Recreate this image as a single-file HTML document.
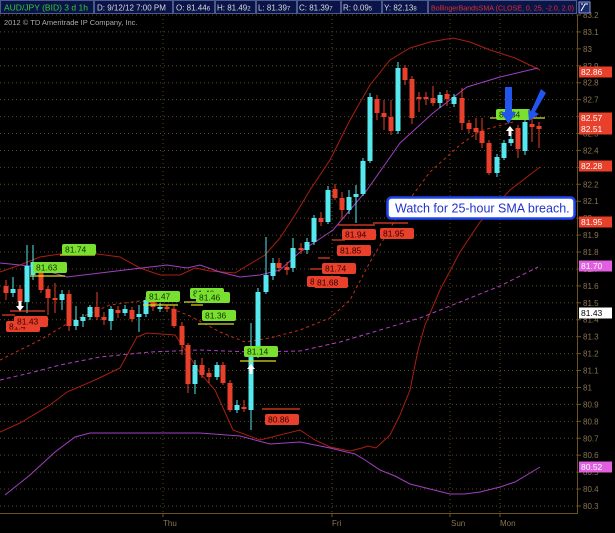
<!DOCTYPE html>
<html><head><meta charset="utf-8"><style>
html,body{margin:0;padding:0;background:#000;width:615px;height:533px;overflow:hidden}
svg{display:block}
text{font-family:"Liberation Sans",sans-serif}
</style></head><body>
<svg id="s" width="615" height="533" viewBox="0 0 615 533" xmlns="http://www.w3.org/2000/svg">
<rect width="615" height="533" fill="#000"/>
<g id="grid"></g>
<g id="lines" fill="none"></g>
<g id="candles"></g>
<g id="labels"></g>
<!-- header -->
<g font-size="8">
<rect x="0" y="0" width="590" height="14" fill="#0a1448"/>
<g stroke="#4a5a8a" fill="none" stroke-width="1">
<rect x="0.5" y="0.5" width="93" height="13"/><rect x="94.5" y="0.5" width="78" height="13"/>
<rect x="173.5" y="0.5" width="41" height="13"/><rect x="215.5" y="0.5" width="40" height="13"/>
<rect x="256.5" y="0.5" width="40" height="13"/><rect x="297.5" y="0.5" width="43" height="13"/>
<rect x="341.5" y="0.5" width="40" height="13"/><rect x="382.5" y="0.5" width="45" height="13"/>
<rect x="428.5" y="0.5" width="148" height="13"/>
</g>
<text x="4" y="10.5" fill="#33cc33" font-size="8.5">AUD/JPY (BID) 3 d 1h</text>
<text x="97" y="10.5" fill="#d8d8d8">D: 9/12/12 7:00 PM</text>
<text x="176" y="10.5" fill="#d8d8d8">O: 81.44<tspan font-size="6">6</tspan></text>
<text x="217" y="10.5" fill="#d8d8d8">H: 81.49<tspan font-size="6">2</tspan></text>
<text x="258" y="10.5" fill="#d8d8d8">L: 81.39<tspan font-size="6">7</tspan></text>
<text x="299" y="10.5" fill="#d8d8d8">C: 81.39<tspan font-size="6">7</tspan></text>
<text x="343" y="10.5" fill="#d8d8d8">R: 0.09<tspan font-size="6">5</tspan></text>
<text x="384" y="10.5" fill="#d8d8d8">Y: 82.13<tspan font-size="6">8</tspan></text>
<text x="431" y="10.5" fill="#e03030" font-size="7.2" textLength="143" lengthAdjust="spacingAndGlyphs">BollingerBandsSMA (CLOSE, 0, 25, -2.0, 2.0)</text>
<rect x="579" y="2" width="11" height="11" fill="#1a2a6a" stroke="#8899cc"/>
<path d="M581 11 L585 4 L588 4 M581 4 L583 4" stroke="#fff" fill="none"/>
</g>
<text x="4" y="25" font-size="7.5" fill="#aaa">2012 © TD Ameritrade IP Company, Inc.</text>
<!-- annotation -->
<rect x="387.5" y="197.5" width="187" height="21" rx="4" fill="#fff" stroke="#1e46f0" stroke-width="2.5"/>
<text x="395" y="212.5" font-size="12.5" fill="#2233cc">Watch for 25-hour SMA breach.</text>
<!-- blue arrows -->
<g fill="#2255ee">
<path d="M505 87 L512 87 L512 112 L516 112 L508.5 124 L501 112 L505 112 Z"/>
<path d="M541 89 L546 93 L535 112 L539 114 L529 121 L528 110 L531 111 Z"/>
</g>
</svg>
<script>
const S=document.getElementById('s');
const ns='http://www.w3.org/2000/svg';
function el(p,t,a,txt){const e=document.createElementNS(ns,t);for(const k in a)e.setAttribute(k,a[k]);if(txt!==undefined)e.textContent=txt;document.getElementById(p).appendChild(e);return e;}
const Y=p=>15+(83.2-p)*169.3;
for(let i=0;i<=29;i++){const p=83.2-i*0.1;const y=Y(p);
 el('grid','line',{x1:0,x2:577,y1:y,y2:y,stroke:'#5a4a20','stroke-dasharray':'1,3'});
 el('grid','line',{x1:577,x2:581,y1:y,y2:y,stroke:'#6b5320'});
 let t=(Math.round(p*10)/10).toString();
 el('grid','text',{x:583,y:y+3,'font-size':8,fill:'#8a7450'},t);}
[163,332,450,500].forEach(x=>{el('grid','line',{x1:x,x2:x,y1:15,y2:513,stroke:'#5a4a20','stroke-dasharray':'1,3'});
 el('grid','line',{x1:x,x2:x,y1:513,y2:517,stroke:'#6b5320'});});
el('grid','line',{x1:577.5,x2:577.5,y1:15,y2:514,stroke:'#6b5320'});
el('grid','line',{x1:0,x2:578,y1:513.5,y2:513.5,stroke:'#6b5320'});
[['Thu',163],['Fri',332],['Sun',451],['Mon',500]].forEach(a=>el('grid','text',{x:a[1],y:526,'font-size':8,fill:'#8a7450'},a[0]));
function pl(pts,col,dash,w){el('lines','polyline',{points:pts.map(p=>p.join(',')).join(' '),stroke:col,'stroke-width':w||1,'stroke-dasharray':dash||''});}
pl([[0,272],[20,265],[40,257],[60,254],[90,253],[120,257],[140,268],[160,275],[180,275],[195,268],[210,271],[235,273],[250,264],[265,255],[280,238],[295,215],[310,190],[330,160],[350,120],[370,85],[390,60],[410,48],[430,42],[453,38],[470,42],[490,50],[515,58],[540,70]],'#a82010');
pl([[0,432],[20,423],[50,405],[67,392],[95,380],[120,368],[137,337],[147,333],[175,335],[190,357],[200,373],[215,390],[233,430],[260,440],[300,430],[315,440],[330,447],[350,451],[362,448],[368,446],[376,448],[390,435],[400,415],[410,390],[418,350],[425,325],[440,290],[460,252],[480,222],[510,190],[540,167]],'#a82010');
pl([[0,360],[40,340],[70,322],[110,305],[140,301],[160,304],[190,316],[220,332],[245,342],[270,338],[300,330],[330,318],[350,300],[370,262],[400,212],[430,172],[460,145],[480,131],[513,122]],'#c03018','3,3');
pl([[0,263],[30,266],[67,277],[100,273],[133,269],[167,265],[187,268],[200,265],[220,272],[240,277],[260,275],[280,270],[300,252],[333,230],[367,190],[400,143],[433,113],[467,87],[500,77],[538,68]],'#a040c0');
pl([[0,380],[30,373],[60,365],[100,357],[150,352],[200,350],[250,352],[300,351],[340,342],[380,330],[420,318],[460,302],[500,286],[538,267]],'#b040c0','4,3');
pl([[5,495],[30,475],[55,452],[75,437],[90,433],[200,433],[240,436],[270,444],[300,442],[330,448],[355,454],[365,460],[380,470],[395,476],[410,484],[430,489],[450,494],[465,494],[480,492],[500,487],[515,482],[540,467]],'#a040c0');
const C=[[6,286,293,'r',280,300],[13,289,293,'c',277,297],[20,289,302,'r',285,312],[27,266,302,'c',245,313],[33,262,275,'c',245,280],[41,266,290,'r',262,293],[48,289,298,'r',286,315],[55,298,300,'r',283,313],[62,294,300,'c',290,310],[69,294,326,'r',290,331],[76,320,326,'c',306,330],[83,317,321,'c',314,327],[90,307,317,'c',305,320],[97,307,317,'r',292,320],[104,317,320,'r',312,325],[111,309,321,'c',306,330],[118,310,313,'r',306,318],[125,309,313,'c',305,316],[132,310,319,'r',307,322],[139,314,317,'c',305,332],[146,300,314,'c',297,317],[153,300,307,'r',298,311],[160,307,309,'c',303,312],[167,307,309,'r',305,312],[174,309,326,'r',306,328],[182,326,345,'r',322,355],[188,345,384,'r',343,393],[195,365,384,'c',360,394],[202,365,375,'r',358,378],[209,373,377,'r',368,383],[217,365,377,'c',362,380],[223,365,383,'r',362,385],[230,383,410,'r',380,412],[237,405,410,'c',400,413],[244,407,409,'r',400,412],[251,357,410,'c',323,430],[258,292,357,'c',288,358],[266,275,292,'c',237,294],[273,263,276,'c',258,280],[279,263,268,'r',258,272],[287,267,270,'r',262,275],[293,248,268,'c',238,272],[301,248,250,'r',243,254],[307,242,250,'c',238,254],[314,218,242,'c',215,245],[321,218,222,'r',212,226],[328,190,222,'c',186,224],[335,189,198,'r',184,200],[342,198,210,'r',192,220],[349,197,210,'c',190,214],[356,194,197,'c',185,223],[363,161,194,'c',158,196],[370,97,161,'c',93,163],[377,99,113,'r',95,120],[384,113,117,'r',100,130],[391,117,131,'r',100,135],[398,68,131,'c',62,134],[405,68,80,'r',65,85],[412,79,118,'r',76,124],[419,97,99,'r',92,112],[426,97,99,'r',92,105],[433,98,103,'r',86,106],[440,95,103,'c',92,108],[447,94,99,'r',90,106],[454,97,104,'c',94,107],[462,98,123,'r',88,130],[469,123,129,'r',120,133],[476,128,132,'r',118,140],[482,131,143,'r',118,148],[489,143,173,'r',140,175],[497,157,173,'c',154,177],[504,143,158,'c',140,160],[511,139,143,'c',136,146],[518,128,149,'r',125,158],[525,122,151,'c',118,155],[532,124,127,'r',118,142],[539,126,129,'r',122,148]];
C.forEach(c=>{const col=c[3]=='c'?'#55e8ee':'#e8402a';
 el('candles','line',{x1:c[0],x2:c[0],y1:c[4],y2:c[5],stroke:col});
 el('candles','rect',{x:c[0]-2.5,y:c[1],width:5,height:Math.max(2,c[2]-c[1]),fill:col});});
function lab(x,y,t,bg,fg,w){el('labels','rect',{x:x,y:y,width:w||34,height:11,rx:2,fill:bg});el('labels','text',{x:x+3,y:y+8.5,'font-size':8.5,fill:fg},t);}
[[60,95,255,'#d8e020'],[30,65,276,'#d8e020'],[143,178,305,'#d8e020'],[184,196,302,'#d8e020'],[191,203,305,'#d8e020'],[198,234,324,'#d8e020'],[240,276,361,'#d8e020'],[490,545,118,'#d8e020'],[10,45,311,'#e8402a'],[262,300,409,'#e8402a'],[338,375,225,'#e8402a'],[373,408,223,'#e8402a'],[332,345,240,'#e8402a'],[318,330,258,'#e8402a'],[310,322,269,'#e8402a'],[2,15,315,'#e8402a']].forEach(l=>el('labels','line',{x1:l[0],x2:l[1],y1:l[2],y2:l[2],stroke:l[3],'stroke-width':1.2}));
const G='#7ae030';
lab(62,244,'81.74',G,'#103000');lab(33,262,'81.63',G,'#103000');lab(146,291,'81.47',G,'#103000');lab(190,288,'81.46',G,'#103000');lab(196,292,'81.46',G,'#103000');lab(202,310,'81.36',G,'#103000');lab(244,346,'81.14',G,'#103000');lab(496,109,'82.64',G,'#103000');
const R='#e8402a';
lab(6,321,'81.4',R,'#300');lab(14,316,'81.43',R,'#300');lab(265,414,'80.86',R,'#300');lab(342,229,'81.94',R,'#300');lab(380,228,'81.95',R,'#300');lab(337,245,'81.85',R,'#300');lab(307,276,'81.6',R,'#300');lab(322,263,'81.74',R,'#300');lab(314,277,'81.68',R,'#300');
function ax(y,t,bg,fg){el('labels','rect',{x:579,y:y-5.5,width:33,height:11,fill:bg});el('labels','text',{x:581,y:y+3,'font-size':8.5,fill:fg},t);}
ax(72,'82.86',R,'#fff');ax(118,'82.57',R,'#fff');ax(129,'82.51',R,'#fff');ax(166,'82.28',R,'#fff');ax(222,'81.95',R,'#fff');ax(266,'81.70','#e060e0','#fff');ax(313,'81.43','#fff','#000');ax(467,'80.52','#e060e0','#fff');
function wa(x,y,down){const d=down?`M${x-1.5} ${y-8} L${x+1.5} ${y-8} L${x+1.5} ${y-3} L${x+4} ${y-3} L${x} ${y+2} L${x-4} ${y-3} L${x-1.5} ${y-3}Z`:`M${x-1.5} ${y+8} L${x+1.5} ${y+8} L${x+1.5} ${y+3} L${x+4} ${y+3} L${x} ${y-2} L${x-4} ${y+3} L${x-1.5} ${y+3}Z`;el('labels','path',{d:d,fill:'#fff'});}
wa(20,309,true);wa(251,366,false);wa(510,128,false);
</script>
</body></html>
